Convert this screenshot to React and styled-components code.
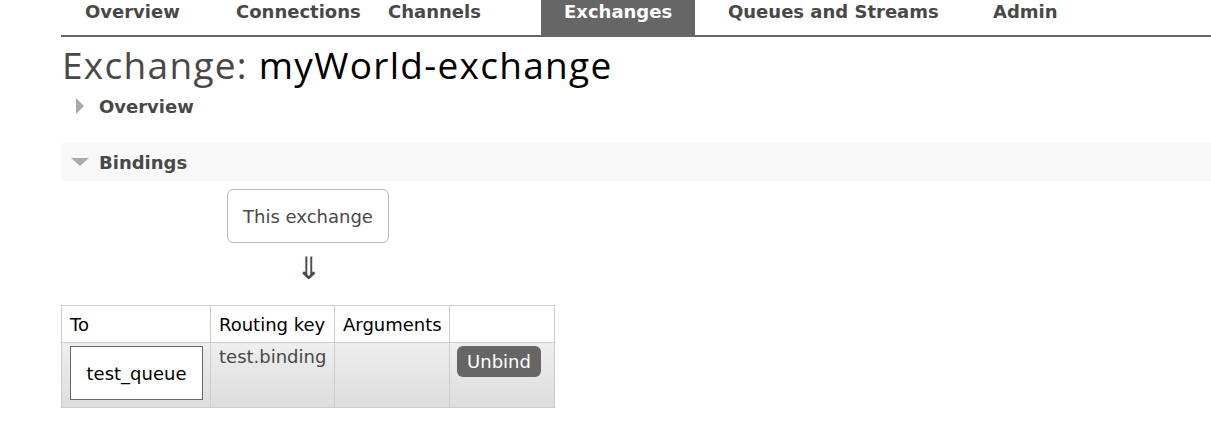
import React from "react";
import styled, { createGlobalStyle } from "styled-components";

const Global = createGlobalStyle`
  html, body { margin: 0; padding: 0; background: #fff; }
  body { font-family: "DejaVu Sans", Verdana, sans-serif; color: #484848; }
`;

const Page = styled.div`
  padding-left: 61px;
`;

const Menu = styled.nav`
  display: flex;
  height: 35px;
  padding-left: 1px;
  border-bottom: 2px solid #666;
`;

const Tab = styled.a`
  display: block;
  flex: none;
  box-sizing: border-box;
  width: ${(p) => (p.$w ? `${p.$w}px` : "auto")};
  padding: 0 23px;
  margin-right: ${(p) => p.$gap || 0}px;
  font-size: 18px;
  font-weight: bold;
  line-height: 23px;
  white-space: nowrap;
  color: ${(p) => (p.$active ? "#fff" : "#484848")};
  background: ${(p) => (p.$active ? "#666" : "transparent")};
  text-decoration: none;
`;

const Title = styled.h1`
  margin: 7px 0 0 1px;
  font-family: "Open Sans", "Noto Sans", sans-serif;
  font-weight: normal;
  font-size: 37px;
  letter-spacing: 1.3px;
  line-height: 42px;
  color: #484848;
  b { font-weight: normal; color: #000; }
`;

const Section = styled.div`
  display: flex;
  align-items: center;
  height: ${(p) => p.$h}px;
  margin-top: ${(p) => p.$mt}px;
  background: ${(p) => (p.$open ? "#f8f8f8" : "transparent")};
`;

const Arrow = styled.span`
  display: flex;
  justify-content: center;
  width: 38px;
`;

const SectionTitle = styled.h2`
  margin: 0;
  font-size: 18px;
  font-weight: bold;
  color: #484848;
`;

const Bindings = styled.div`
  display: flex;
  flex-direction: column;
  align-items: flex-start;
`;

const ExchangeBox = styled.div`
  margin: 8px 0 0 166px;
  width: 160px;
  height: 52px;
  border: 1px solid #bbb;
  border-radius: 6px;
  display: flex;
  align-items: center;
  justify-content: center;
  font-size: 18px;
  color: #484848;
`;

const DownArrow = styled.div`
  margin: 9px 0 0 235px;
  font-size: 31px;
  line-height: 32px;
  color: #484848;
`;

const Table = styled.table`
  margin-top: 21px;
  border-collapse: collapse;
  table-layout: fixed;
  width: 493px;
  font-size: 18px;
  td, th { border: 1px solid #ccc; }
`;

const Th = styled.th`
  height: 37px;
  padding: 0 8px;
  text-align: left;
  font-weight: normal;
  color: #000;
  white-space: nowrap;
  vertical-align: middle;
  box-sizing: border-box;
  background: #fff;
`;

const Row = styled.tr`
  background: linear-gradient(#eee, #ddd);
`;

const Td = styled.td`
  height: 65px;
  padding: ${(p) => p.$pad};
  vertical-align: top;
  color: #484848;
  white-space: nowrap;
  box-sizing: border-box;
`;

const QueueBox = styled.div`
  width: 131px;
  height: 52px;
  border: 1px solid #666;
  background: #fff;
  display: flex;
  align-items: center;
  justify-content: center;
  color: #000;
`;

const Button = styled.button`
  width: 84px;
  height: 31px;
  border: none;
  border-radius: 6px;
  background: #666;
  color: #fff;
  font-family: "DejaVu Sans", Verdana, sans-serif;
  font-size: 18px;
  padding: 0;
`;

const tabs = [
  { t: "Overview", w: 151 },
  { t: "Connections", w: 152 },
  { t: "Channels", w: 176 },
  { t: "Exchanges", w: 154, gap: 10, active: true },
  { t: "Queues and Streams", w: 265 },
  { t: "Admin" },
];

export default function App() {
  return (
    <Page>
      <Global />
      <Menu>
        {tabs.map((x) => (
          <Tab key={x.t} $w={x.w} $gap={x.gap} $active={x.active}>
            {x.t}
          </Tab>
        ))}
      </Menu>
      <Title>
        Exchange: <b>myWorld-exchange</b>
      </Title>
      <Section $h={30} $mt={5}>
        <Arrow>
          <svg width="10" height="16" viewBox="0 0 10 16">
            <path d="M1 0 L9 8 L1 16 Z" fill="#aaa" />
          </svg>
        </Arrow>
        <SectionTitle>Overview</SectionTitle>
      </Section>
      <Section $h={38} $mt={22} $open>
        <Arrow>
          <svg width="18" height="9" viewBox="0 0 18 9">
            <path d="M0 0 L18 0 L9 8 Z" fill="#aaa" />
          </svg>
        </Arrow>
        <SectionTitle>Bindings</SectionTitle>
      </Section>
      <Bindings>
        <ExchangeBox>This exchange</ExchangeBox>
        <DownArrow>⇓</DownArrow>
        <Table>
          <colgroup>
            <col style={{ width: 149 }} />
            <col style={{ width: 124 }} />
            <col style={{ width: 115 }} />
            <col style={{ width: 105 }} />
          </colgroup>
          <thead>
            <tr>
              <Th>To</Th>
              <Th>Routing key</Th>
              <Th>Arguments</Th>
              <Th></Th>
            </tr>
          </thead>
          <tbody>
            <Row>
              <Td $pad="3px 7px 0 8px">
                <QueueBox>test_queue</QueueBox>
              </Td>
              <Td $pad="3px 8px 0">test.binding</Td>
              <Td $pad="3px 8px 0"></Td>
              <Td $pad="3px 8px 0 7px">
                <Button>Unbind</Button>
              </Td>
            </Row>
          </tbody>
        </Table>
      </Bindings>
    </Page>
  );
}
